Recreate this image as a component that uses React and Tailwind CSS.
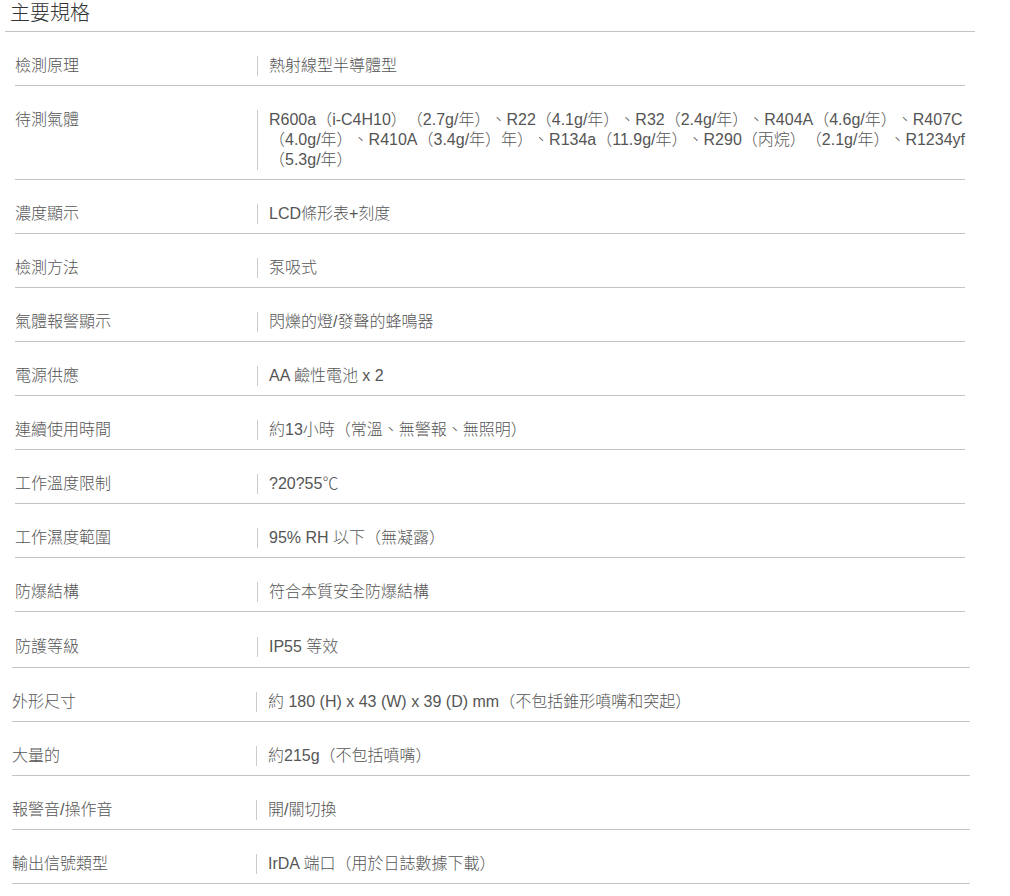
const specs = [
  { label: "檢測原理", value: ["熱射線型半導體型"] },
  {
    label: "待測氣體",
    value: [
      "R600a（i-C4H10）（2.7g/年）、R22（4.1g/年）、R32（2.4g/年）、R404A（4.6g/年）、R407C",
      "（4.0g/年）、R410A（3.4g/年）年）、R134a（11.9g/年）、R290（丙烷）（2.1g/年）、R1234yf",
      "（5.3g/年）",
    ],
  },
  { label: "濃度顯示", value: ["LCD條形表+刻度"] },
  { label: "檢測方法", value: ["泵吸式"] },
  { label: "氣體報警顯示", value: ["閃爍的燈/發聲的蜂鳴器"] },
  { label: "電源供應", value: ["AA 鹼性電池 x 2"] },
  { label: "連續使用時間", value: ["約13小時（常溫、無警報、無照明）"] },
  { label: "工作溫度限制", value: ["?20?55℃"] },
  { label: "工作濕度範圍", value: ["95% RH 以下（無凝露）"] },
  { label: "防爆結構", value: ["符合本質安全防爆結構"] },
]

const moreSpecs = [
  { label: "外形尺寸", value: ["約 180 (H) x 43 (W) x 39 (D) mm（不包括錐形噴嘴和突起）"] },
  { label: "大量的", value: ["約215g（不包括噴嘴）"] },
  { label: "報警音/操作音", value: ["開/關切換"] },
  { label: "輸出信號類型", value: ["IrDA 端口（用於日誌數據下載）"] },
]

function Row({ label, value, labelClass = "w-[242px]", rowClass = "pt-[24px] pb-[9px]" }) {
  return (
    <div className={`flex items-start border-b border-[#c4c4c4] ${rowClass}`}>
      <div className={`shrink-0 ${labelClass}`}>{label}</div>
      <div className="border-l border-[#cccccc] pl-[11px] whitespace-nowrap">
        {value.map((line, i) => (
          <div key={i}>{line}</div>
        ))}
      </div>
    </div>
  )
}

export default function App() {
  return (
    <div className="w-[1010px] h-[896px] bg-white text-[#555] text-[16px] leading-[20px] font-light [text-spacing-trim:space-all] font-['Liberation_Sans','Noto_Sans_CJK_TC',sans-serif]">
      {/* Title */}
      <div className="ml-[5px] w-[970px] h-[32px] border-b border-[#c4c4c4] pl-[5px] pt-[1px]">
        <h2 className="text-[20px] leading-[24px] text-[#333] font-light">主要規格</h2>
      </div>

      {/* Main table */}
      <div className="ml-[15px] w-[950px]">
        {specs.map((s) => (
          <Row key={s.label} label={s.label} value={s.value} />
        ))}
      </div>

      {/* Extra rows */}
      <div className="ml-[12px] w-[958px]">
        <Row
          label="防護等級"
          value={["IP55 等效"]}
          labelClass="w-[245px] pl-[3px]"
          rowClass="pt-[25px] pb-[10px]"
        />
        {moreSpecs.map((s) => (
          <Row key={s.label} label={s.label} value={s.value} labelClass="w-[244px]" />
        ))}
      </div>
    </div>
  )
}
